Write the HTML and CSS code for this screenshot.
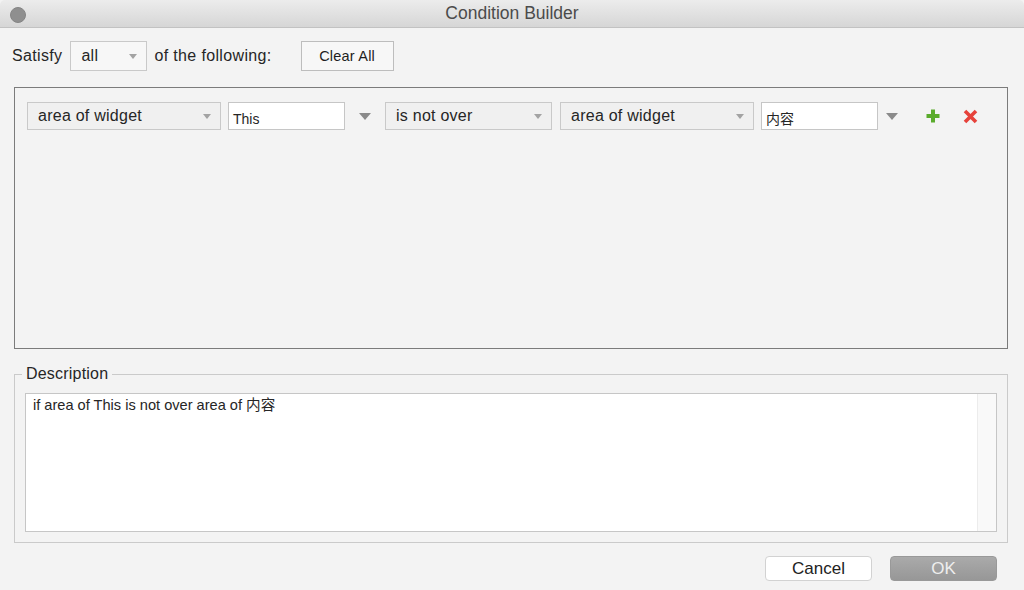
FILE: index.html
```html
<!DOCTYPE html>
<html lang="en">
<head>
  <meta charset="UTF-8">
  <meta name="viewport" content="width=device-width, initial-scale=1.0">
  <title>Condition Builder</title>
  <link rel="stylesheet" href="styles.css">
</head>
<body>

<div class="window">
  <div class="titlebar">
    <span class="close-dot"></span>
    <span class="title">Condition Builder</span>
  </div>

  <div class="content">
    <!-- match mode -->
    <div class="toolbar">
      <span class="label">Satisfy</span>
      <div class="select select-mode">all<span class="caret"></span></div>
      <span class="label">of the following:</span>
      <button class="btn clear-btn">Clear All</button>
    </div>

    <!-- condition rows -->
    <div class="conditions">
      <div class="cond-row">
        <div class="select select-wide">area of widget<span class="caret"></span></div>
        <div class="combo">
          <div class="textbox">This</div>
          <span class="combo-caret"></span>
        </div>
        <div class="select select-op">is not over<span class="caret"></span></div>
        <div class="select select-wide">area of widget<span class="caret"></span></div>
        <div class="combo combo-last">
          <div class="textbox">内容</div>
          <span class="combo-caret"></span>
        </div>
        <span class="row-btn add-btn">
          <svg width="16" height="16" viewBox="0 0 16 16"><path d="M8 1.5v13M1.5 8h13" stroke="#5aab2c" stroke-width="4"/></svg>
        </span>
        <span class="row-btn del-btn">
          <svg width="15" height="15" viewBox="0 0 15 15"><path d="M2 2l11 11M13 2L2 13" stroke="#e6423b" stroke-width="3.6"/></svg>
        </span>
      </div>
    </div>

    <fieldset class="description">
      <legend>Description</legend>
      <div class="desc-box">
        <div class="desc-text">if area of This is not over area of 内容</div>
        <div class="scroll-track"></div>
      </div>
    </fieldset>

    <div class="actions">
      <button class="btn cancel-btn">Cancel</button>
      <button class="btn ok-btn">OK</button>
    </div>
  </div>
</div>

</body>
</html>
```

FILE: styles.css
```css
body {
  margin: 0;
  padding: 0;
  font-family: "Liberation Sans", "Noto Sans CJK SC", Arial, sans-serif;
  color: #262626;
  background-color: #f3f3f3;
}
.window {
  width: 1024px;
  height: 590px;
  background: #f3f3f3;
  border-radius: 5px 5px 0 0;
  overflow: hidden;
}
.titlebar {
  position: relative;
  height: 27px;
  border-bottom: 1px solid #c2c2c2;
  background: linear-gradient(#ececec, #d6d6d6);
  display: flex;
  align-items: center;
  justify-content: center;
}
.close-dot {
  position: absolute;
  left: 10px;
  top: 7px;
  width: 14px;
  height: 14px;
  border-radius: 50%;
  background: #8f8f8f;
  border: 1px solid #858585;
}
.title {
  font-size: 17.5px;
  color: #4b4b4b;
}
.content {
  padding: 0 16px 0 14px;
}
.toolbar {
  display: flex;
  align-items: center;
  height: 30px;
  margin-top: 13px;
}
.label {
  font-size: 16px;
  letter-spacing: 0.35px;
}
.toolbar .label:first-child {
  margin-left: -2px;
  margin-right: 8px;
}
.select {
  position: relative;
  box-sizing: border-box;
  height: 28px;
  line-height: 26px;
  padding-left: 10px;
  font-size: 16px;
  letter-spacing: 0.25px;
  background: #f0f0f0;
  border: 1px solid #c9c9c9;
}
.caret {
  position: absolute;
  right: 9px;
  top: 11px;
  border-left: 4px solid transparent;
  border-right: 4px solid transparent;
  border-top: 5px solid #a3a3a3;
}
.select-mode {
  width: 77px;
  height: 30px;
  line-height: 28px;
  background: #f7f7f7;
  margin-right: 7px;
}
.select-mode .caret {
  top: 12px;
}
.btn {
  font-family: inherit;
  cursor: pointer;
  box-sizing: border-box;
}
.clear-btn {
  margin-left: 29px;
  width: 93px;
  height: 30px;
  font-size: 14.5px;
  letter-spacing: 0.2px;
  color: #1e1e1e;
  background: #f7f7f7;
  border: 1px solid #bdbdbd;
}
.conditions {
  box-sizing: border-box;
  margin-top: 16px;
  height: 262px;
  border: 1px solid #7b7b7b;
  padding: 14px 12px;
}
.cond-row {
  display: flex;
  align-items: center;
}
.select-wide {
  width: 194px;
}
.select-op {
  width: 167px;
  margin-right: 8px;
}
.combo {
  display: flex;
  align-items: center;
  margin-left: 7px;
}
.textbox {
  box-sizing: border-box;
  width: 117px;
  height: 28px;
  padding: 6px 0 0 4px;
  font-size: 14px;
  line-height: 20px;
  background: #fff;
  border: 1px solid #c6c6c6;
}
.combo-caret {
  width: 40px;
  display: flex;
  justify-content: center;
}
.combo-caret::after {
  content: "";
  border-left: 6px solid transparent;
  border-right: 6px solid transparent;
  border-top: 7px solid #8a8a8a;
}
.combo-last .combo-caret {
  width: 26px;
  justify-content: flex-start;
  padding-left: 8px;
}
.row-btn {
  display: flex;
  align-items: center;
}
.add-btn {
  margin-left: 13px;
}
.del-btn {
  margin-left: 22px;
}
.description {
  margin: 16px 0 0;
  padding: 0 10px 10px;
  border: 1px solid #cacaca;
  min-width: 0;
}
.description legend {
  margin-left: -3px;
  padding: 0 4px;
  font-size: 16px;
  letter-spacing: 0.2px;
  line-height: 18px;
}
.desc-box {
  margin-top: 10px;
  height: 139px;
  display: flex;
  background: #fff;
  border: 1px solid #c6c6c6;
  box-sizing: border-box;
}
.desc-text {
  flex: 1;
  padding: 2px 7px;
  font-size: 14.6px;
  line-height: 18px;
}
.scroll-track {
  width: 18px;
  background: #f9f9f9;
  border-left: 1px solid #ececec;
}
.actions {
  display: flex;
  justify-content: flex-end;
  gap: 18px;
  margin-top: 13px;
  padding-right: 11px;
}
.cancel-btn, .ok-btn {
  width: 107px;
  height: 25px;
  font-size: 17px;
  border-radius: 4px;
  padding: 0;
}
.cancel-btn {
  background: #fff;
  color: #222;
  border: 1px solid #d2d2d2;
}
.ok-btn {
  background: linear-gradient(#aaaaaa, #979797);
  color: #eeeeee;
  border: 1px solid #999;
}
```
